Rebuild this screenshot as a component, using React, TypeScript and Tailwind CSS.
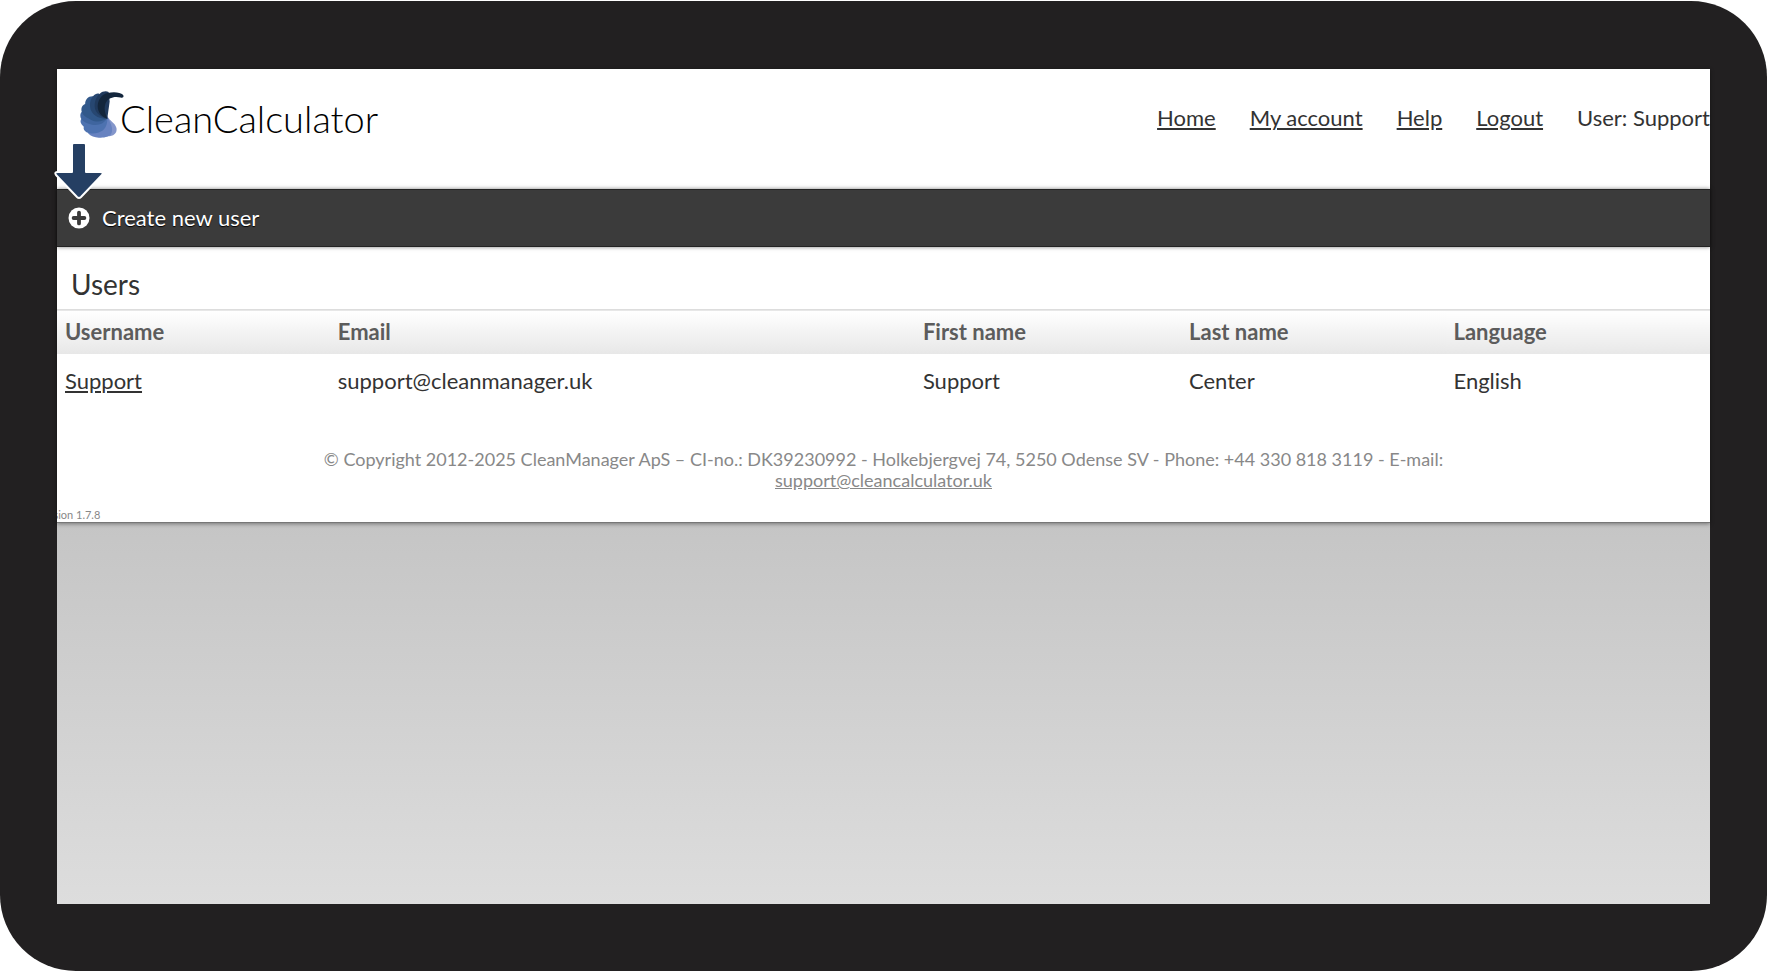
import React from "react";

const navLinks = [
  { id: "home", label: "Home" },
  { id: "account", label: "My account" },
  { id: "help", label: "Help" },
  { id: "logout", label: "Logout" },
];

const columns = [
  { label: "Username", width: "w-[16.5%]" },
  { label: "Email", width: "w-[35.4%]" },
  { label: "First name", width: "w-[16.1%]" },
  { label: "Last name", width: "w-[16%]" },
  { label: "Language", width: "w-[16%]" },
];

const users = [
  {
    username: "Support",
    email: "support@cleanmanager.uk",
    firstName: "Support",
    lastName: "Center",
    language: "English",
  },
];

const LogoMark = () => (
  <svg viewBox="8 6 132 144" className="h-[49px] w-[45px]" aria-hidden="true">
    <path
      fill="#8496cb"
      d="M90 82C98 98 114 102 118 118C120 130 114 140 98 142L60 134L60 90Z"
    />
    <path
      fill="#6782c0"
      d="M90 84C100 100 110 120 103 134C98 144 82 147 66 146C54 145 42 142 35 134L36 100Z"
    />
    <path
      fill="#4d72b0"
      d="M91 90C92 108 84 126 66 131C52 135 38 134 30 130C23 126 20 120 22 114C13 107 10 98 14 92L40 70Z"
    />
    <path
      fill="#3f659f"
      d="M91 90C80 106 64 112 46 108C32 105 20 100 15 92C10 84 11 75 16 70L50 54Z"
    />
    <path
      fill="#31588a"
      d="M91 90C78 98 60 102 44 94C30 87 18 80 16 70C13 60 17 50 26 47C26 34 34 24 48 24L70 30Z"
    />
    <path
      fill="#274771"
      d="M91 90C72 92 52 84 44 68C37 52 40 34 49 24C55 18 61 15 67 17L84 36Z"
    />
    <path
      fill="#203a5d"
      d="M91 90C72 86 56 74 54 56C53 38 60 24 69 17C77 9 88 8 95 12L98 40Z"
    />
    <path
      fill="#13263c"
      d="M92 91C74 86 61 70 63 50C65 32 77 18 92 15C110 10 130 13 137 20C141 26 138 30 130 28C112 23 92 29 86 45C80 60 85 76 92 91Z"
    />
  </svg>
);

const PlusIcon = () => (
  <svg viewBox="0 0 22 22" className="size-[22px]" aria-hidden="true">
    <circle cx="11" cy="11" r="10.5" fill="#fff" />
    <path
      d="M11 5.6V16.4M5.6 11H16.4"
      stroke="#3b3b3b"
      strokeWidth="3.8"
      strokeLinecap="round"
    />
  </svg>
);

const ArrowDown = () => (
  <svg
    viewBox="0 0 50 58"
    className="pointer-events-none absolute bottom-full left-1/2 mb-[7px] h-[58px] w-[50px] -translate-x-1/2"
    aria-hidden="true"
  >
    <path
      d="M20 1H30Q32 1 32 3V30H46Q50 30 48 33L27 55Q25 57 23 55L2 33Q0 30 4 30H18V3Q18 1 20 1Z"
      fill="#253f63"
      stroke="#fff"
      strokeWidth="2"
      strokeLinejoin="round"
    />
  </svg>
);

const App = () => {
  return (
    <div className="flex min-h-screen flex-col bg-white pt-px font-['Lato',sans-serif] text-[#333333]">
      <div className="flex flex-1 flex-col rounded-[76px] bg-[#222021] px-[57px] pt-[68px] pb-[67px]">
        <div className="flex flex-1 flex-col bg-linear-to-b from-[#a9a9a9] to-[#dddddd]">
          <div className="border-b border-[#777777] bg-white shadow-[0_1px_4px_rgba(0,0,0,0.4)]">
            {/* Header */}
            <header className="flex h-[120px] items-start justify-between pt-[21px] pl-[22px]">
              <a href="#home" className="flex items-start text-black">
                <LogoMark />
                <span className="-ml-1 pt-1 text-[38px] leading-[48px] font-light">
                  CleanCalculator
                </span>
              </a>
              <nav className="flex items-center gap-[34px] pt-[14px] text-[22px] leading-7">
                {navLinks.map((link) => (
                  <a key={link.id} href={`#${link.id}`} className="underline">
                    {link.label}
                  </a>
                ))}
                <span>User: Support</span>
              </nav>
            </header>

            {/* Toolbar */}
            <div className="flex h-[58px] items-center border-y border-[#242424] bg-[#3b3b3b] pl-[11px] shadow-[0_0_4px_rgba(0,0,0,0.5)]">
              <button
                type="button"
                className="flex items-center gap-3 text-[22px] leading-7 text-white [text-shadow:0_1px_1px_#000]"
              >
                <span className="relative">
                  <PlusIcon />
                  <ArrowDown />
                </span>
                Create new user
              </button>
            </div>

            {/* Users */}
            <main>
              <h1 className="px-[14px] pt-[19px] pb-[7px] text-[28px] leading-9">Users</h1>
              <table className="w-full table-fixed text-left text-[22px] leading-7">
                <thead>
                  <tr className="border-t border-[#dddddd] bg-linear-to-b from-white to-[#e7e7e7] text-[#5c5c5c]">
                    {columns.map((column) => (
                      <th key={column.label} className={`${column.width} px-2 py-2 font-bold`}>
                        {column.label}
                      </th>
                    ))}
                  </tr>
                </thead>
                <tbody>
                  {users.map((user) => (
                    <tr key={user.email}>
                      <td className="px-2 py-[13px]">
                        <a href="#user" className="underline">
                          {user.username}
                        </a>
                      </td>
                      <td className="px-2 py-[13px]">{user.email}</td>
                      <td className="px-2 py-[13px]">{user.firstName}</td>
                      <td className="px-2 py-[13px]">{user.lastName}</td>
                      <td className="px-2 py-[13px]">{user.language}</td>
                    </tr>
                  ))}
                </tbody>
              </table>
            </main>

            {/* Footer */}
            <footer className="overflow-hidden pt-[41px] text-[#888888]">
              <p className="text-center text-[18px] leading-[21px]">
                © Copyright 2012-2025 CleanManager ApS – CI-no.: DK39230992 - Holkebjergvej 74, 5250
                Odense SV - Phone: +44 330 818 3119 - E-mail:
                <br />
                <a href="mailto:support@cleancalculator.uk" className="underline">
                  support@cleancalculator.uk
                </a>
              </p>
              <p className="-ml-5 pt-4 text-[11px] leading-[15px]">Version 1.7.8</p>
            </footer>
          </div>
        </div>
      </div>
    </div>
  );
};

export default App;
